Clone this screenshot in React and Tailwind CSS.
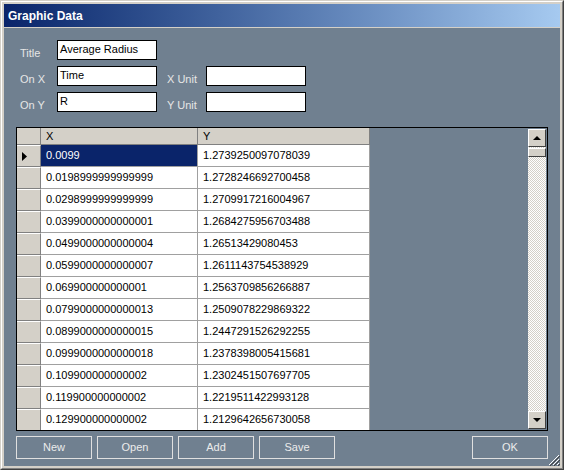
const rows = [
  ['0.0099', '1.2739250097078039'],
  ['0.0198999999999999', '1.2728246692700458'],
  ['0.0298999999999999', '1.2709917216004967'],
  ['0.0399000000000001', '1.2684275956703488'],
  ['0.0499000000000004', '1.26513429080453'],
  ['0.0599000000000007', '1.2611143754538929'],
  ['0.069900000000001', '1.2563709856266887'],
  ['0.0799000000000013', '1.2509078229869322'],
  ['0.0899000000000015', '1.2447291526292255'],
  ['0.0999000000000018', '1.2378398005415681'],
  ['0.109900000000002', '1.2302451507697705'],
  ['0.119900000000002', '1.2219511422993128'],
  ['0.129900000000002', '1.2129642656730058'],
]

function Field({ label, value, labelW = 'w-[41px] pl-[4px]' }) {
  return (
    <div className="flex items-start h-[20px]">
      <div className={`${labelW} h-[20px] pt-[7px] leading-[13px] text-[#e6e6e6]`}>{label}</div>
      <div className="w-[100px] h-[20px] bg-white border border-black px-[2px] leading-[17px] text-black">{value}</div>
    </div>
  )
}

function Raised({ className = '', children }) {
  return (
    <div className={`bg-[#d4d0c8] border border-t-white border-l-white border-r-[#404040] border-b-[#404040] flex items-center justify-center ${className}`}>
      {children}
    </div>
  )
}

export default function GraphicData() {
  return (
    <div
      className="w-[564px] h-[470px] bg-[#d4d0c8] border border-t-[#d4d0c8] border-l-[#d4d0c8] border-r-[#404040] border-b-[#404040] flex flex-col text-[11px]"
      style={{ fontFamily: '"Liberation Sans", Arial, sans-serif' }}
    >
      <div className="flex-1 flex flex-col border border-t-white border-l-white border-r-[#808080] border-b-[#808080] p-[2px]">
        <div className="h-[23px] bg-gradient-to-r from-[#0a246a] to-[#a6caf0] flex items-center pl-[4px] text-white font-bold text-[12px]">
          Graphic Data
        </div>
        <div className="mt-[1px] flex-1 bg-[#708090] relative px-[12px] pt-[12px] flex flex-col">
          <div className="flex flex-col gap-[6px]">
            <Field label="Title" value="Average Radius" />
            <div className="flex gap-[10px]">
              <Field label="On X" value="Time" />
              <Field label="X Unit" value="" labelW="w-[39px]" />
            </div>
            <div className="flex gap-[10px]">
              <Field label="On Y" value="R" />
              <Field label="Y Unit" value="" labelW="w-[39px]" />
            </div>
          </div>

          <div className="mt-[15px] w-[532px] h-[304px] border border-black flex overflow-hidden">
            <div className="flex-1 flex flex-col overflow-hidden">
              <div className="flex h-[17px] shrink-0">
                <div className="w-[24px] bg-[#d4d0c8] border-r border-b border-[#808080]" />
                <div className="w-[157px] bg-[#d4d0c8] border-r border-b border-[#808080] pl-[5px] leading-[16px] text-black">X</div>
                <div className="w-[172px] bg-[#d4d0c8] border-r border-b border-[#808080] pl-[5px] leading-[16px] text-black">Y</div>
              </div>
              {rows.map(([x, y], i) => (
                <div key={i} className="flex h-[22px] shrink-0">
                  <div className="w-[24px] bg-[#d4d0c8] border-t border-t-white border-b border-b-[#808080] border-r border-r-[#808080] flex items-center pl-[5px]">
                    {i === 0 && (
                      <svg width="5" height="9" viewBox="0 0 5 9">
                        <path d="M0 0 L5 4.5 L0 9 Z" fill="#000" />
                      </svg>
                    )}
                  </div>
                  <div
                    className={`w-[157px] border-b border-r border-[#a0a0a0] pl-[5px] leading-[21px] ${
                      i === 0 ? 'bg-[#0a246a] text-white' : 'bg-white text-black'
                    }`}
                  >
                    {x}
                  </div>
                  <div className="w-[172px] border-b border-r border-[#a0a0a0] bg-white pl-[5px] leading-[21px] text-black">{y}</div>
                </div>
              ))}
            </div>
            <div className="w-[18px] mr-[1px] mt-[1px] mb-[1px] flex flex-col bg-[repeating-conic-gradient(#d4d0c8_0_25%,#ffffff_0_50%)] bg-[length:2px_2px]">
              <Raised className="h-[18px]">
                <svg width="8" height="4" viewBox="0 0 8 4">
                  <path d="M0 4 L4 0 L8 4 Z" fill="#000" />
                </svg>
              </Raised>
              <Raised className="h-[9px] mt-[1px]" />
              <div className="flex-1" />
              <Raised className="h-[18px]">
                <svg width="8" height="4" viewBox="0 0 8 4">
                  <path d="M0 0 L8 0 L4 4 Z" fill="#000" />
                </svg>
              </Raised>
            </div>
          </div>

          <div className="mt-[5px] flex gap-[5px] text-[#ececec]">
            {['New', 'Open', 'Add', 'Save'].map((b) => (
              <div key={b} className="w-[76px] h-[23px] border border-[#e0e0e0] flex items-center justify-center">
                {b}
              </div>
            ))}
            <div className="ml-auto w-[76px] h-[23px] border border-[#e0e0e0] flex items-center justify-center">OK</div>
          </div>

          <svg className="absolute right-0 bottom-0" width="12" height="12" viewBox="0 0 12 12">
            <path d="M11 1 L1 11 M11 5 L5 11 M11 9 L9 11" stroke="#ffffff" strokeWidth="1" />
            <path d="M12 2 L2 12 M12 6 L6 12 M12 10 L10 12" stroke="#404040" strokeWidth="1" />
          </svg>
        </div>
      </div>
    </div>
  )
}
